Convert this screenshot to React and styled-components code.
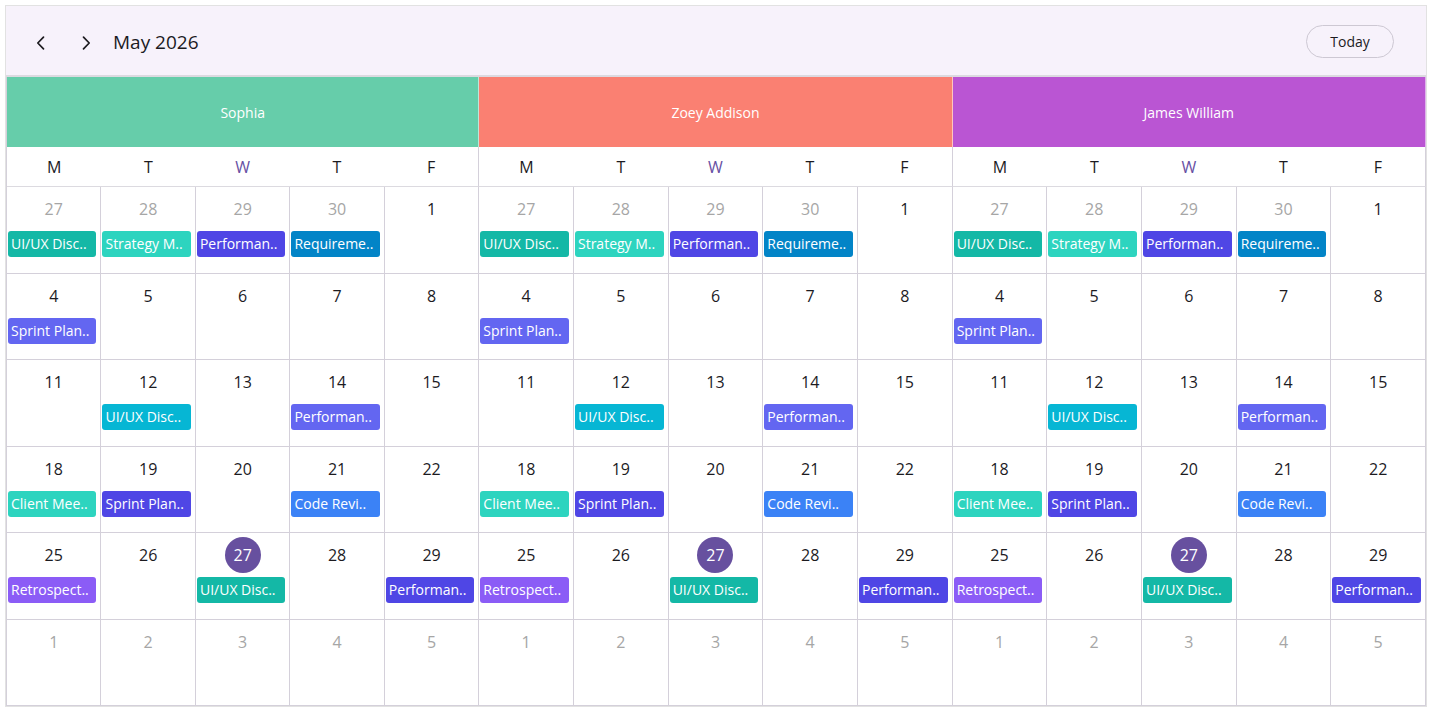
import React from "react";
import styled, { createGlobalStyle } from "styled-components";

const Global = createGlobalStyle`
  html, body { margin: 0; padding: 0; background: #ffffff; }
  body { font-family: "Segoe UI", "Open Sans", "Noto Sans", sans-serif; color: #1c1b1f; }
  * { box-sizing: border-box; }
`;

const Frame = styled.div`
  margin: 5px;
  width: 1422px;
  height: 702px;
  border: 1px solid #e2e2e2;
  display: flex;
  flex-direction: column;
  background: #ffffff;
`;

const Toolbar = styled.div`
  height: 71px;
  flex: none;
  display: flex;
  align-items: center;
  padding: 4px 32px 0 19px;
  background: #f7f2fb;
  border-bottom: 2px solid #dcdae0;
`;

const NavButton = styled.button`
  width: 32px;
  height: 32px;
  border: none;
  background: transparent;
  padding: 0;
  display: flex;
  align-items: center;
  justify-content: center;
  color: #1c1b1f;
  cursor: pointer;
  & + & { margin-left: 13px; }
`;

const Title = styled.div`
  margin-left: 11px;
  font-size: 19px;
  color: #1c1b1f;
  padding-bottom: 1px;
`;

const Spacer = styled.div`
  flex: 1;
`;

const TodayButton = styled.button`
  width: 88px;
  height: 33px;
  border: 1px solid #cdc8d3;
  border-radius: 17px;
  background: transparent;
  font-family: inherit;
  font-size: 14px;
  color: #1c1b1f;
  margin-top: -3px;
`;

const Body = styled.div`
  flex: 1;
  display: grid;
  grid-template-columns: repeat(3, 1fr);
`;

const Panel = styled.div`
  display: flex;
  flex-direction: column;
  border-left: ${(p) => (p.$first ? "1px solid #d4d0da" : "none")};
`;

const ResourceHead = styled.div`
  height: 70px;
  display: flex;
  align-items: center;
  justify-content: center;
  background: ${(p) => p.$color};
  color: #ffffff;
  font-size: 14px;
  border-right: 1px solid rgba(255, 255, 255, 0.55);
`;

const DayNames = styled.div`
  height: 40px;
  display: grid;
  grid-template-columns: repeat(5, 1fr);
  align-items: center;
  border-bottom: 1px solid #dcdae0;
  border-right: 1px solid #d4d0da;
`;

const DayName = styled.div`
  text-align: center;
  font-size: 16px;
  color: ${(p) => (p.$accent ? "#6750a4" : "#1c1b1f")};
`;

const Month = styled.div`
  flex: 1;
  display: grid;
  grid-template-columns: repeat(5, 1fr);
  grid-template-rows: repeat(6, 1fr);
`;

const Cell = styled.div`
  border-right: 1px solid #d4d0da;
  border-bottom: 1px solid #d4d0da;
  padding: 4px 4px 0 1px;
  display: flex;
  flex-direction: column;
  align-items: stretch;
  min-width: 0;
`;

const DateRow = styled.div`
  height: 36px;
  display: flex;
  align-items: center;
  justify-content: center;
  margin-left: 3px;
`;

const DateNum = styled.span`
  width: 36px;
  height: 36px;
  border-radius: 50%;
  display: flex;
  align-items: center;
  justify-content: center;
  font-size: 16px;
  color: ${(p) => (p.$today ? "#ffffff" : p.$other ? "#a6a6a6" : "#1c1b1f")};
  background: ${(p) => (p.$today ? "#67509f" : "transparent")};
`;

const Chip = styled.div`
  margin-top: 4px;
  height: 26px;
  border-radius: 3px;
  background: ${(p) => p.$color};
  color: #ffffff;
  font-size: 14px;
  line-height: 26px;
  padding-left: 3px;
  white-space: nowrap;
  overflow: hidden;
`;

const Chevron = ({ dir }) => (
  <svg width="16" height="16" viewBox="0 0 16 16" fill="none">
    <path
      d={dir === "left" ? "M10.5 2.2 L4.8 8 L10.5 13.8" : "M5.5 2.2 L11.2 8 L5.5 13.8"}
      stroke="#1c1b1f"
      strokeWidth="1.7"
      strokeLinecap="round"
      strokeLinejoin="round"
    />
  </svg>
);

const resources = [
  { name: "Sophia", color: "#66cdaa" },
  { name: "Zoey Addison", color: "#fa8072" },
  { name: "James William", color: "#ba55d3" },
];

const dayNames = ["M", "T", "W", "T", "F"];

const weeks = [
  [
    { d: 27, o: true, e: ["UI/UX Disc..", "#14b8a6"] },
    { d: 28, o: true, e: ["Strategy M..", "#2dd4bf"] },
    { d: 29, o: true, e: ["Performan..", "#4f46e5"] },
    { d: 30, o: true, e: ["Requireme..", "#0284c7"] },
    { d: 1 },
  ],
  [
    { d: 4, e: ["Sprint Plan..", "#6366f1"] },
    { d: 5 },
    { d: 6 },
    { d: 7 },
    { d: 8 },
  ],
  [
    { d: 11 },
    { d: 12, e: ["UI/UX Disc..", "#06b6d4"] },
    { d: 13 },
    { d: 14, e: ["Performan..", "#6366f1"] },
    { d: 15 },
  ],
  [
    { d: 18, e: ["Client Mee..", "#2dd4bf"] },
    { d: 19, e: ["Sprint Plan..", "#4f46e5"] },
    { d: 20 },
    { d: 21, e: ["Code Revi..", "#3b82f6"] },
    { d: 22 },
  ],
  [
    { d: 25, e: ["Retrospect..", "#8b5cf6"] },
    { d: 26 },
    { d: 27, t: true, e: ["UI/UX Disc..", "#14b8a6"] },
    { d: 28 },
    { d: 29, e: ["Performan..", "#4f46e5"] },
  ],
  [
    { d: 1, o: true },
    { d: 2, o: true },
    { d: 3, o: true },
    { d: 4, o: true },
    { d: 5, o: true },
  ],
];

export default function App() {
  return (
    <>
      <Global />
      <Frame>
        <Toolbar>
          <NavButton aria-label="Previous">
            <Chevron dir="left" />
          </NavButton>
          <NavButton aria-label="Next">
            <Chevron dir="right" />
          </NavButton>
          <Title>May 2026</Title>
          <Spacer />
          <TodayButton>Today</TodayButton>
        </Toolbar>
        <Body>
          {resources.map((r, ri) => (
            <Panel key={r.name} $first={ri === 0}>
              <ResourceHead $color={r.color}>{r.name}</ResourceHead>
              <DayNames>
                {dayNames.map((n, i) => (
                  <DayName key={i} $accent={i === 2}>
                    {n}
                  </DayName>
                ))}
              </DayNames>
              <Month>
                {weeks.flat().map((c, i) => (
                  <Cell key={i}>
                    <DateRow>
                      <DateNum $other={c.o} $today={c.t}>
                        {c.d}
                      </DateNum>
                    </DateRow>
                    {c.e && <Chip $color={c.e[1]}>{c.e[0]}</Chip>}
                  </Cell>
                ))}
              </Month>
            </Panel>
          ))}
        </Body>
      </Frame>
    </>
  );
}
